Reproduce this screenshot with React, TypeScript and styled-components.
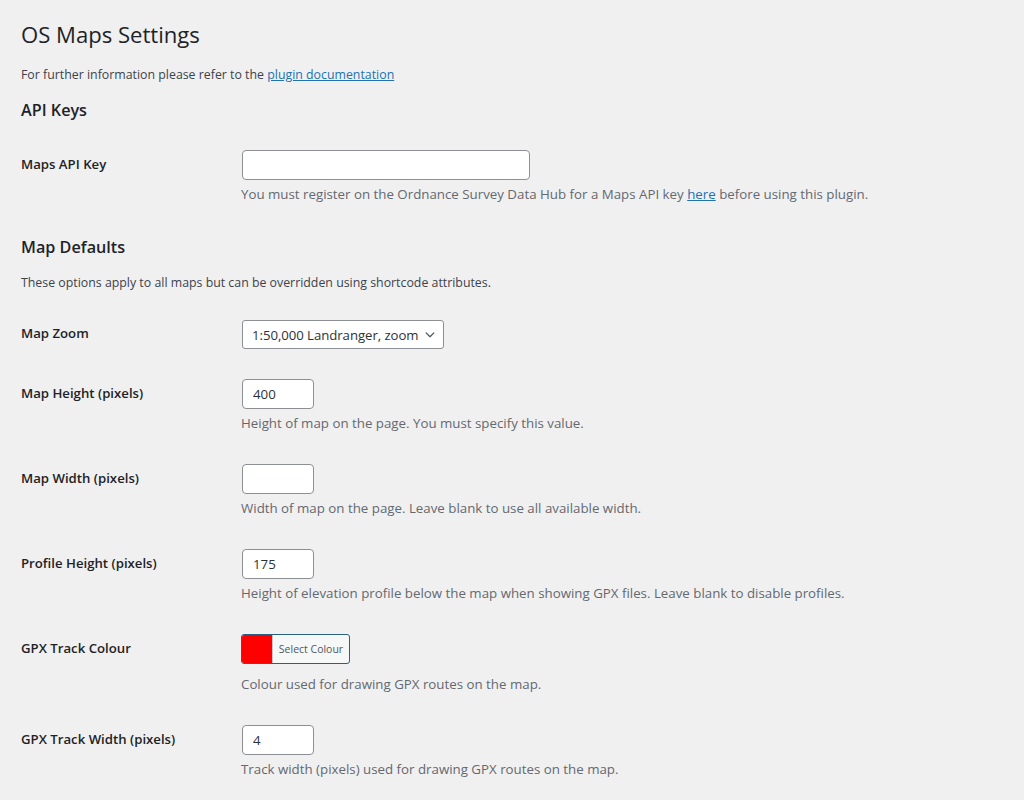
import React from "react";
import styled, { createGlobalStyle } from "styled-components";

const GlobalStyle = createGlobalStyle`
  html, body {
    margin: 0;
    padding: 0;
    background: #f0f0f1;
  }
  body {
    font-family: "Open Sans", "Noto Sans", sans-serif;
    font-size: 12.35px;
    line-height: 18px;
    color: #3c434a;
  }
`;

const Wrap = styled.div`
  padding: 10px 20px 0 21px;
`;

const Title = styled.h1`
  font-size: 22.1px;
  font-weight: 400;
  margin: 0;
  padding: 9px 0 4px;
  line-height: 30px;
  color: #1d2327;
`;

const Intro = styled.p<{ $top: number; $bottom: number }>`
  font-size: 12.35px;
  line-height: 18px;
  margin: ${(p) => p.$top}px 0 ${(p) => p.$bottom}px;
`;

const Link = styled.a`
  color: #2271b1;
  text-decoration: underline;
`;

const SectionTitle = styled.h2<{ $top: number }>`
  font-size: 16.2px;
  font-weight: 600;
  line-height: 22px;
  color: #1d2327;
  margin: ${(p) => p.$top}px 0 14px;
`;

const Table = styled.div<{ $top: number }>`
  display: grid;
  grid-template-columns: 210px 1fr;
  margin-top: ${(p) => p.$top}px;
`;

const Label = styled.div`
  padding: 20px 10px 20px 0;
  font-size: 13.2px;
  font-weight: 600;
  line-height: 18px;
  color: #1d2327;
`;

const Cell = styled.div`
  padding: 15px 10px;
  font-size: 13.3px;
  line-height: 18px;
`;

const TextInput = styled.input<{ $w: number }>`
  box-sizing: border-box;
  display: block;
  width: ${(p) => p.$w}px;
  height: 30px;
  margin: 0 0 0 1px;
  padding: 0 10px;
  border: 1px solid #8c8f94;
  border-radius: 4px;
  background: #fff;
  font-family: inherit;
  font-size: 13.3px;
  color: #2c3338;
  outline: none;
`;

const SelectBox = styled.div`
  box-sizing: border-box;
  display: flex;
  align-items: center;
  gap: 5px;
  width: 202px;
  height: 29px;
  margin: 1px 0 0 1px;
  padding: 0 6px 0 9px;
  border: 1px solid #8c8f94;
  border-radius: 3px;
  background: #fff;
  font-size: 13.2px;
  letter-spacing: -0.05px;
  color: #2c3338;
`;

const SelectText = styled.span`
  flex: 1;
  min-width: 0;
  white-space: nowrap;
  overflow: hidden;
`;

const Description = styled.p<{ $top?: number }>`
  margin: ${(p) => p.$top ?? 4}px 0 0;
  font-size: 13.3px;
  line-height: 21px;
  color: #646970;
`;

const ColorButton = styled.div`
  box-sizing: border-box;
  display: inline-flex;
  vertical-align: top;
  width: 109px;
  height: 30px;
  border: 1px solid #2b5f83;
  border-radius: 3px;
  overflow: hidden;
  background: #f6f7f7;
`;

const Swatch = styled.span<{ $c: string }>`
  flex: 0 0 30px;
  background: ${(p) => p.$c};
  border-right: 1px solid #c3c4c7;
`;

const ColorText = styled.span`
  flex: 1;
  text-align: center;
  font-size: 10.5px;
  line-height: 28px;
  color: #50575e;
  white-space: nowrap;
`;

const Chevron = () => (
  <svg width="14" height="14" viewBox="0 0 20 20" fill="none" style={{ flexShrink: 0 }}>
    <path d="M4.5 7l5.5 5.5L15.5 7" stroke="#50575e" strokeWidth="1.8" strokeLinecap="round" strokeLinejoin="round" />
  </svg>
);

export default function App() {
  return (
    <>
      <GlobalStyle />
      <Wrap>
        <Title>OS Maps Settings</Title>
        <Intro $top={13} $bottom={0}>
          For further information please refer to the <Link href="#">plugin documentation</Link>
        </Intro>

        <SectionTitle $top={15}>API Keys</SectionTitle>
        <Table $top={14}>
          <Label>Maps API Key</Label>
          <Cell>
            <TextInput $w={288} type="text" />
            <Description>
              You must register on the Ordnance Survey Data Hub for a Maps API key <Link href="#">here</Link> before
              using this plugin.
            </Description>
          </Cell>
        </Table>

        <SectionTitle $top={16}>Map Defaults</SectionTitle>
        <Intro $top={16} $bottom={12}>
          These options apply to all maps but can be overridden using shortcode attributes.
        </Intro>
        <Table $top={12}>
          <Label>Map Zoom</Label>
          <Cell>
            <SelectBox>
              <SelectText>1:50,000 Landranger, zoom</SelectText>
              <Chevron />
            </SelectBox>
          </Cell>

          <Label>Map Height (pixels)</Label>
          <Cell>
            <TextInput $w={72} type="text" defaultValue="400" />
            <Description>Height of map on the page. You must specify this value.</Description>
          </Cell>

          <Label>Map Width (pixels)</Label>
          <Cell>
            <TextInput $w={72} type="text" />
            <Description>Width of map on the page. Leave blank to use all available width.</Description>
          </Cell>

          <Label>Profile Height (pixels)</Label>
          <Cell>
            <TextInput $w={72} type="text" defaultValue="175" />
            <Description>
              Height of elevation profile below the map when showing GPX files. Leave blank to disable profiles.
            </Description>
          </Cell>

          <Label>GPX Track Colour</Label>
          <Cell>
            <ColorButton>
              <Swatch $c="#ff0000" />
              <ColorText>Select Colour</ColorText>
            </ColorButton>
            <Description $top={10}>Colour used for drawing GPX routes on the map.</Description>
          </Cell>

          <Label>GPX Track Width (pixels)</Label>
          <Cell>
            <TextInput $w={72} type="text" defaultValue="4" />
            <Description>Track width (pixels) used for drawing GPX routes on the map.</Description>
          </Cell>
        </Table>
      </Wrap>
    </>
  );
}
